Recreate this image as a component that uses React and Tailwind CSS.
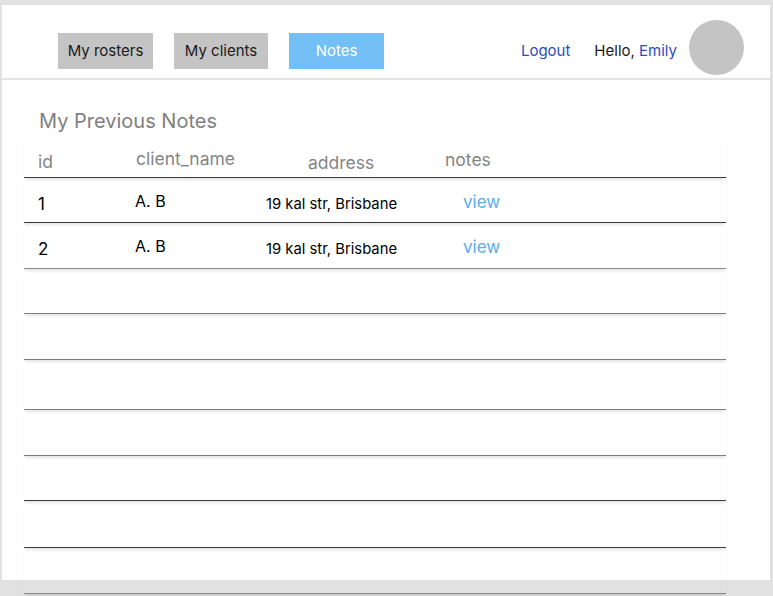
import React from "react";

const rows = [
  { h: "h-[45px]", line: "border-[#3b3b3b]", id: "1", name: "A. B", addr: "19 kal str, Brisbane", view: true },
  { h: "h-[46px]", line: "border-[#8a8a8a]", id: "2", name: "A. B", addr: "19 kal str, Brisbane", view: true },
  { h: "h-[45px]", line: "border-[#7c7c7c]" },
  { h: "h-[46px]", line: "border-[#7c7c7c]" },
  { h: "h-[50px]", line: "border-[#7c7c7c]" },
  { h: "h-[46px]", line: "border-[#7c7c7c]" },
  { h: "h-[45px]", line: "border-[#3b3b3b]" },
  { h: "h-[47px]", line: "border-[#3b3b3b]" },
  { h: "h-[46px]", line: "border-[#8a8a8a]" },
];

export default function App() {
  return (
    <div
      className="min-h-screen bg-[#e1e1e1] pl-[2px] pr-[3px] pt-[5px] overflow-hidden h-[596px]"
      style={{ fontFamily: "Inter, 'Noto Sans', sans-serif" }}
    >
      <div className="h-[575px] bg-white">
        <header className="h-[75px] border-b-2 border-[#e3e3e3] flex items-start">
          <nav className="ml-[56px] mt-[28px] flex gap-[21px]">
            <div className="w-[95px] h-[36px] bg-[#c4c4c4] flex items-center justify-center text-[15px] text-[#1a1a1a]">
              My rosters
            </div>
            <div className="w-[94px] h-[36px] bg-[#c4c4c4] flex items-center justify-center text-[15px] text-[#1a1a1a]">
              My clients
            </div>
            <div className="w-[95px] h-[36px] bg-[#74bff5] flex items-center justify-center text-[15px] text-white">
              Notes
            </div>
          </nav>
          <div className="ml-auto mr-[26px] mt-[15px] flex items-start">
            <span className="mt-[21px] text-[15px] leading-[20px] text-[#2a4dc8] mr-[24px]">Logout</span>
            <span className="mt-[21px] text-[15px] leading-[20px] text-[#1a1a1a]">
              Hello, <span className="text-[#2a4dc8]">Emily</span>
            </span>
            <div className="ml-[12px] w-[55px] h-[55px] rounded-full bg-[#c4c4c4]" />
          </div>
        </header>

        <main className="pl-[22px]">
          <h1 className="ml-[15px] mt-[29px] text-[20px] leading-[24px] text-[#808080]">
            My Previous Notes
          </h1>
          <div className="w-[702px]">
            <div className="flex h-[45px] border-b border-[#3b3b3b] shadow-[0_3px_3px_-1px_rgba(0,0,0,0.11)] text-[17.5px] leading-[20px] text-[#858585]">
              <div className="w-[112px] pl-[14px] pt-[19px]">id</div>
              <div className="w-[172px] pt-[16px]">client_name</div>
              <div className="w-[137px] pt-[20px]">address</div>
              <div className="pt-[17px]">notes</div>
            </div>
            {rows.map((r, i) => (
              <div
                key={i}
                className={`flex ${r.h} border-b-[1.5px] ${r.line} shadow-[0_3px_3px_-1px_rgba(0,0,0,0.11)]`}
              >
                {r.id && (
                  <>
                    <div className="w-[111px] pl-[14px] pt-[16px] text-[17px] leading-[20px] text-black">
                      {r.id}
                    </div>
                    <div className="w-[131px] pt-[13px] text-[16px] leading-[20px] text-black">
                      {r.name}
                    </div>
                    <div className="w-[197px] pt-[17px] text-[14.8px] leading-[18px] text-black">
                      {r.addr}
                    </div>
                    <div className="pt-[14px] text-[17px] leading-[20px] text-[#58adec]">view</div>
                  </>
                )}
              </div>
            ))}
          </div>
        </main>
      </div>
    </div>
  );
}
